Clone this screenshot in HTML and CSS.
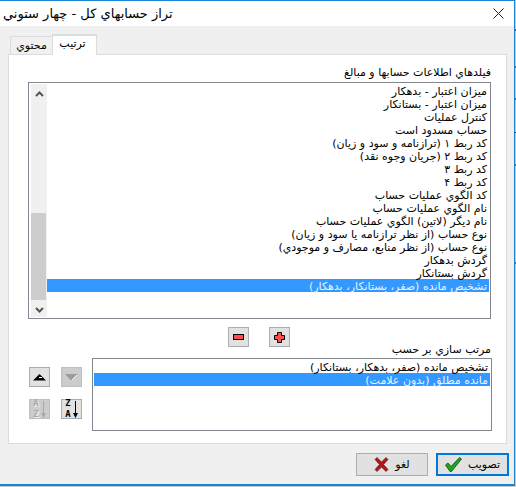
FILE: index.html
```html
<!DOCTYPE html>
<html lang="fa">
  <head>
    <meta charset="UTF-8" />
    <title>تراز حسابهاي کل - چهار ستوني</title>
    <link rel="stylesheet" href="styles.css">
  </head>
  <body>
    <div class="window">
      <div class="titlebar">
        <span class="title">تراز حسابهاي کل - چهار ستوني</span>
        <svg class="close" width="11" height="11" viewBox="0 0 11 11">
          <path d="M0.5 0.5L10.5 10.5M10.5 0.5L0.5 10.5" stroke="#222" fill="none" />
        </svg>
      </div>

      <div class="body">
        <div class="tabs">
          <div class="tab tab-inactive">محتوي</div>
          <div class="tab tab-active">ترتیب</div>
        </div>

        <div class="panel">
          <div class="field-label">فیلدهاي اطلاعات حسابها و مبالغ</div>
          <div class="listbox listbox-fields">
            <div class="scrollbar">
              <svg class="arrow" width="9" height="6" viewBox="0 0 9 6">
                <path d="M1 5L4.5 1.5L8 5" stroke="#555" stroke-width="2" fill="none" />
              </svg>
              <div class="scroll-track"><div class="scroll-thumb"></div></div>
              <svg class="arrow" width="9" height="6" viewBox="0 0 9 6">
                <path d="M1 1L4.5 4.5L8 1" stroke="#555" stroke-width="2" fill="none" />
              </svg>
            </div>
            <ul class="items">
              <li>میزان اعتبار - بدهکار</li>
              <li>میزان اعتبار - بستانکار</li>
              <li>کنترل عملیات</li>
              <li>حساب مسدود است</li>
              <li>کد ربط ۱ (ترازنامه و سود و زیان)</li>
              <li>کد ربط ۲ (جریان وجوه نقد)</li>
              <li>کد ربط ۳</li>
              <li>کد ربط ۴</li>
              <li>کد الگوي عملیات حساب</li>
              <li>نام الگوي عملیات حساب</li>
              <li>نام دیگر (لاتین) الگوي عملیات حساب</li>
              <li>نوع حساب (از نظر ترازنامه یا سود و زیان)</li>
              <li>نوع حساب (از نظر منابع، مصارف و موجودي)</li>
              <li>گردش بدهکار</li>
              <li>گردش بستانکار</li>
              <li class="selected">تشخیص مانده (صفر، بستانکار، بدهکار)</li>
            </ul>
          </div>

          <div class="add-remove">
            <button class="icon-btn">
              <svg width="11" height="6" viewBox="0 0 11 6">
                <rect x="0.5" y="0.5" width="10" height="5" fill="#ff4d4d" stroke="#000" />
              </svg>
            </button>
            <button class="icon-btn">
              <svg width="11" height="11" viewBox="0 0 11 11">
                <path d="M3.5 0.5H7.5V3.5H10.5V7.5H7.5V10.5H3.5V7.5H0.5V3.5H3.5Z" fill="#ff4d4d" stroke="#000" />
              </svg>
            </button>
          </div>

          <div class="sort-label">مرتب سازي بر حسب</div>
          <div class="sort-row">
            <div class="sort-tools">
              <button class="icon-btn">
                <svg width="13" height="7" viewBox="0 0 13 7">
                  <path d="M6.5 0L13 6.5H0Z" fill="#000" />
                  <path d="M6 3H9V4H6Z" fill="#fff" />
                </svg>
              </button>
              <button class="icon-btn is-disabled">
                <svg width="13" height="7" viewBox="0 0 13 7">
                  <path d="M0 0H13L6.5 7Z" fill="#9c9c9c" />
                  <path d="M6.5 6.5L12 1" stroke="#fff" fill="none" />
                </svg>
              </button>
              <button class="icon-btn is-disabled">
                <span class="az az-off">
                  <span class="az-letters"><span>A</span><span>Z</span></span>
                  <svg width="5" height="17" viewBox="0 0 5 17">
                    <path d="M2 0H3V12H5L2.5 17L0 12H2Z" fill="#a8a8a8" />
                  </svg>
                </span>
              </button>
              <button class="icon-btn">
                <span class="az">
                  <span class="az-letters"><span>Z</span><span>A</span></span>
                  <svg width="5" height="17" viewBox="0 0 5 17">
                    <path d="M2 0H3V12H5L2.5 17L0 12H2Z" fill="#000" />
                  </svg>
                </span>
              </button>
            </div>
            <ul class="listbox items listbox-sort">
              <li>تشخیص مانده (صفر، بدهکار، بستانکار)</li>
              <li class="selected">مانده مطلق (بدون علامت)</li>
            </ul>
          </div>
        </div>

        <div class="actions">
          <button class="btn">
            <svg width="15" height="15" viewBox="0 0 15 15">
              <path d="M1 2.5L3 0.5L7.5 5L12 0.5L14 2.5L9.5 7.5L14 12.5L12 14.5L7.5 10L3 14.5L1 12.5L5.5 7.5Z" fill="#b01818" stroke="#5c0c0c" stroke-width="0.6" />
            </svg>
            <span>لغو</span>
          </button>
          <button class="btn btn-default">
            <svg width="17" height="15" viewBox="0 0 17 15">
              <path d="M0.5 8L3 6L6 9.5L14.5 0.5L16.5 2L6.5 14.5H5Z" fill="#1fa51f" stroke="#0b4d0b" stroke-width="0.8" />
            </svg>
            <span>تصویب</span>
          </button>
        </div>
      </div>
    </div>
  </body>
</html>
```

FILE: styles.css
```css
/* Base Styles */
:root {
  --face: #f0f0f0;
  --edge: #dcdcdc;
  --list-border: #828790;
  --select: #3399ff;
  --accent: #0078d7;
  --frame: #1883d7;
}

* {
  box-sizing: border-box;
}

html,
body {
  height: 100%;
}

body {
  margin: 0;
  /* what shows of the application behind the dialog */
  background: linear-gradient(
    #c6ccc6 0 29px, #6b5a3a 29px 31px,
    #c6ccc6 31px 66px, #6b5a3a 66px 68px,
    #c6ccc6 68px 98px, #4a5a7a 98px 100px,
    #c6ccc6 100px 132px, #222 132px 133px,
    #c6ccc6 133px 164px, #6b5a3a 164px 166px,
    #c6ccc6 166px 262px, #5a6a8a 262px 264px,
    #c6ccc6 264px
  );
  color: #000;
  font-family: "DejaVu Sans", sans-serif;
  font-size: 11px;
  overflow: hidden;
}

/* Window frame */
.window {
  display: flex;
  flex-direction: column;
  width: 515px;
  height: 486px;
  background: var(--face);
  border-top: 1px solid var(--frame);
  border-bottom: 2px solid var(--frame);
  border-right: 1px solid var(--frame);
}

.titlebar {
  display: flex;
  justify-content: space-between;
  align-items: center;
  height: 25px;
  padding: 0 10px 0 3px;
  background: white;
}

.title {
  font-size: 13px;
  direction: rtl;
}

/* Tabs */
.body {
  flex: 1;
  display: flex;
  flex-direction: column;
  padding: 8px 7px 0 8px;
}

.tabs {
  display: flex;
  align-items: flex-end;
  height: 21px;
  padding-left: 2px;
  margin-bottom: -1px;
}

.tab {
  display: flex;
  align-items: center;
  justify-content: center;
  border: 1px solid var(--edge);
  border-bottom: none;
}

.tab-inactive {
  width: 42px;
  height: 19px;
  padding-bottom: 1px;
  background: var(--face);
  border-right: none;
}

.tab-active {
  width: 45px;
  height: 21px;
  background: white;
  padding: 0 4px 4px 0;
  position: relative;
  z-index: 1;
  border-width: 2px 1px 0;
}

.panel {
  height: 390px;
  background: white;
  border: 1px solid var(--edge);
  padding: 11px 15px 0 19px;
}

/* Lists */
.field-label,
.sort-label {
  direction: rtl;
  line-height: 14px;
}

.field-label {
  height: 16px;
}

.sort-label {
  height: 15px;
}

.listbox {
  border: 1px solid var(--list-border);
  background: white;
}

.listbox-fields {
  display: flex;
  height: 237px;
  padding: 1px;
}

.scrollbar {
  display: flex;
  flex-direction: column;
  align-items: center;
  width: 16px;
  height: 233px;
  flex: none;
  margin-left: 1px;
  background: var(--face);
}

.arrow {
  flex: none;
  margin: 7px 0 4px;
}

.scroll-track {
  flex: 1;
  display: flex;
  flex-direction: column;
  justify-content: flex-end;
  width: 100%;
}

.scroll-thumb {
  height: 87px;
  margin-right: 1px;
  background: #cdcdcd;
}

.items {
  flex: 1;
  margin: 0;
  padding: 0;
  list-style: none;
  direction: rtl;
}

.items li {
  height: 13px;
  line-height: 15px;
  padding-right: 2px;
  white-space: nowrap;
}

.items li.selected {
  background: var(--select);
  color: #eaf3ff;
}

/* Add / remove */
.add-remove {
  display: flex;
  justify-content: center;
  gap: 20px;
  height: 28px;
  margin-bottom: -4px;
  padding-top: 8px;
  margin-right: 2px;
}

.icon-btn {
  display: flex;
  align-items: center;
  justify-content: center;
  width: 21px;
  height: 20px;
  padding: 0;
  background: #e1e1e1;
  border: 1px solid #adadad;
}

.icon-btn.is-disabled {
  background: #cccccc;
  border-color: #bfbfbf;
}

/* Sort section */
.sort-row {
  display: flex;
  gap: 10px;
}

.sort-tools {
  display: grid;
  grid-template-columns: 21px 21px;
  column-gap: 11px;
  row-gap: 12px;
  align-content: start;
  padding: 9px 0 0 1px;
  width: 54px;
}

.listbox-sort {
  flex: none;
  width: 400px;
  height: 73px;
  padding: 1px;
}

.az {
  display: flex;
  align-items: center;
  gap: 2px;
  height: 18px;
  color: #000;
}

.az-letters {
  display: flex;
  flex-direction: column;
  font-family: "DejaVu Sans Mono", monospace;
  font-size: 9px;
  font-weight: bold;
  line-height: 11px;
}

.az-off {
  color: #a8a8a8;
}

.az-off .az-letters {
  text-shadow: 1px 1px 0 #f4f4f4;
}

/* Buttons */
.actions {
  display: flex;
  justify-content: flex-end;
  gap: 8px;
  margin-top: 9px;
}

.btn {
  display: flex;
  align-items: center;
  justify-content: center;
  gap: 6px;
  width: 72px;
  height: 23px;
  padding: 0;
  background: #e1e1e1;
  border: 1px solid #adadad;
  font-family: inherit;
  font-size: 11px;
  color: #000;
}

.btn-default {
  width: 73px;
  border: 2px solid var(--accent);
  margin-right: -2px;
}
```
